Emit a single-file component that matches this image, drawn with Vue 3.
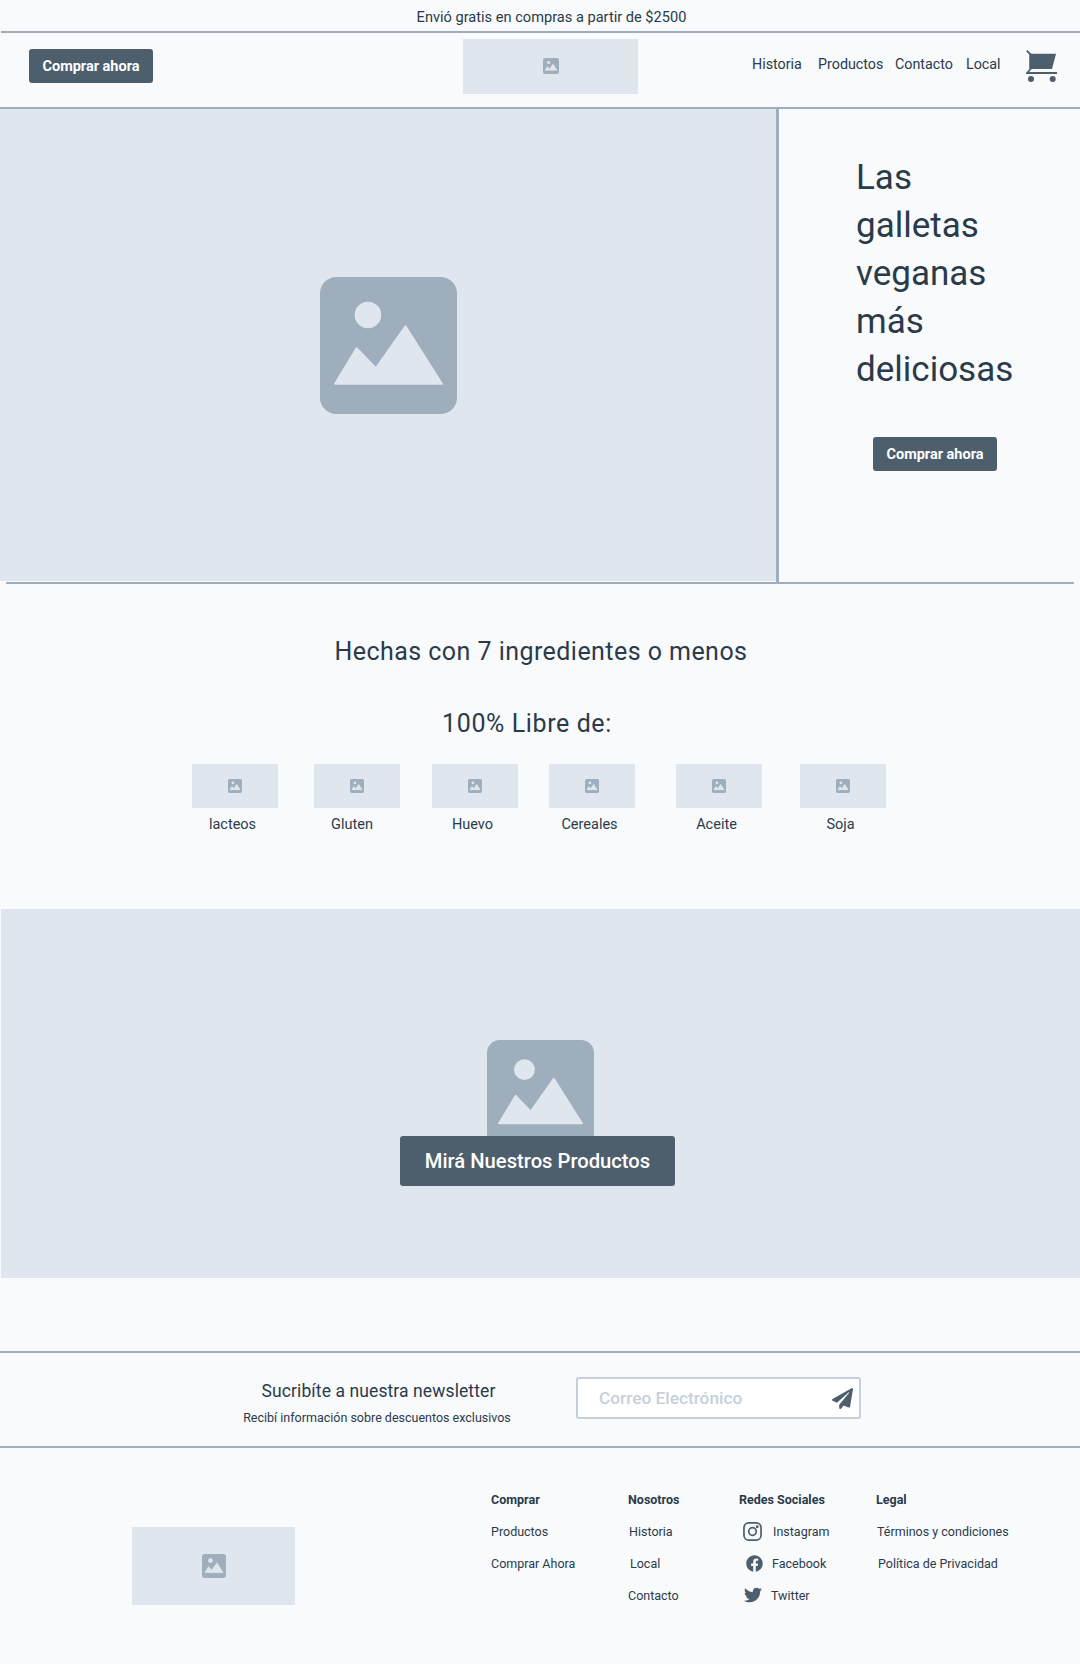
<script setup>
const freeFrom = ['lacteos', 'Gluten', 'Huevo', 'Cereales', 'Aceite', 'Soja'];

const footerCols = [
  { title: 'Comprar', links: ['Productos', 'Comprar Ahora'] },
  { title: 'Nosotros', links: ['Historia', 'Local', 'Contacto'] },
];
</script>

<template>
  <svg class="sprites" aria-hidden="true">
    <symbol id="img-ph" viewBox="0 0 100 100">
      <rect width="100" height="100" rx="12" fill="#9faebc" />
      <circle cx="35" cy="27.7" r="9.7" fill="#e0e6ee" />
      <path d="M11 78 L26.7 52 L40.8 66.5 L62.4 36 L89 78 Z" fill="#e0e6ee" stroke="#e0e6ee" stroke-width="1.4" stroke-linejoin="round" />
    </symbol>
  </svg>

  <div class="page">
    <div class="promo">Envió gratis en compras a partir de $2500</div>

    <header class="header">
      <button class="btn head-btn">Comprar ahora</button>
      <div class="ph logo"><svg class="ico-16"><use href="#img-ph" /></svg></div>
      <nav class="nav">
        <a>Historia</a>
        <a>Productos</a>
        <a>Contacto</a>
        <a>Local</a>
      </nav>
      <svg class="cart" viewBox="0 0 33 34">
        <path d="M3.3 4.7H30L26 20H3.3Z" fill="#4d5e6c" />
        <path d="M.7 1.7 4.7 5.5V20L1 24H31" fill="none" stroke="#4d5e6c" stroke-width="1.8" />
        <circle cx="5" cy="30" r="3" fill="#4d5e6c" />
        <circle cx="26.7" cy="30" r="3" fill="#4d5e6c" />
      </svg>
    </header>

    <section class="hero">
      <div class="ph hero-img"><svg class="ico-hero"><use href="#img-ph" /></svg></div>
      <div class="hero-side">
        <h1>Las galletas veganas más deliciosas</h1>
        <button class="btn hero-btn">Comprar ahora</button>
      </div>
    </section>

    <section class="free">
      <h2>Hechas con 7 ingredientes o menos</h2>
      <h2 class="free-title">100% Libre de:</h2>
      <div class="free-list">
        <div v-for="item in freeFrom" :key="item" class="free-item">
          <div class="ph free-img"><svg class="ico-14"><use href="#img-ph" /></svg></div>
          <span>{{ item }}</span>
        </div>
      </div>
    </section>

    <section class="ph banner">
      <svg class="ico-banner"><use href="#img-ph" /></svg>
      <button class="btn banner-btn">Mirá Nuestros Productos</button>
    </section>

    <section class="news">
      <div class="news-text">
        <p class="news-title">Sucribíte a nuestra newsletter</p>
        <p class="news-sub">Recibí información sobre descuentos exclusivos</p>
      </div>
      <div class="news-input">
        <span>Correo Electrónico</span>
        <svg class="send" viewBox="0 0 512 512">
          <path fill="#4d5e6c" d="M476 3.2L12.5 270.6c-18.1 10.4-15.8 35.6 2.2 43.2L121 358.4l287.3-253.2c5.5-4.9 13.3 2.6 8.6 8.3L176 407v80.5c0 23.6 28.5 32.9 42.5 15.8L282 426l124.6 52.2c14.2 6 30.4-2.9 33-18.2l72-432C515 7.8 493.3-6.8 476 3.2z" />
        </svg>
      </div>
    </section>

    <footer class="footer">
      <div class="ph foot-logo"><svg class="ico-24"><use href="#img-ph" /></svg></div>
      <div class="foot-cols">
        <div v-for="col in footerCols" :key="col.title" class="foot-col">
          <h4>{{ col.title }}</h4>
          <a v-for="link in col.links" :key="link">{{ link }}</a>
        </div>
        <div class="foot-col social">
          <h4>Redes Sociales</h4>
          <a>
            <svg class="ig" viewBox="0 0 20 20" fill="none" stroke="#4d5e6c" stroke-width="1.8">
              <rect x="1" y="1" width="18" height="18" rx="5" />
              <circle cx="10" cy="10" r="4" />
              <circle cx="15" cy="5" r=".6" fill="#4d5e6c" />
            </svg>
            Instagram
          </a>
          <a>
            <svg class="fb" viewBox="0 0 512 512">
              <path fill="#4d5e6c" d="M504 256C504 119 393 8 256 8S8 119 8 256c0 123.78 90.69 226.38 209.25 245V327.69h-63V256h63v-54.64c0-62.15 37-96.48 93.67-96.48 27.14 0 55.52 4.84 55.52 4.84v61h-31.28c-30.8 0-40.41 19.12-40.41 38.73V256h68.78l-11 71.69h-57.78V501C413.31 482.38 504 379.78 504 256z" />
            </svg>
            Facebook
          </a>
          <a>
            <svg class="tw" viewBox="0 0 512 512">
              <path fill="#4d5e6c" d="M459.37 151.716c.325 4.548.325 9.097.325 13.645 0 138.72-105.583 298.558-298.558 298.558-59.452 0-114.68-17.219-161.137-47.106 8.447.974 16.568 1.299 25.34 1.299 49.055 0 94.213-16.568 130.274-44.832-46.132-.975-84.792-31.188-98.112-72.772 6.498.974 12.995 1.624 19.818 1.624 9.421 0 18.843-1.3 27.614-3.573-48.081-9.747-84.143-51.98-84.143-102.985v-1.299c13.969 7.797 30.214 12.67 47.431 13.319-28.264-18.843-46.781-51.005-46.781-87.391 0-19.492 5.197-37.36 14.294-52.954 51.655 63.675 129.3 105.258 216.365 109.807-1.624-7.797-2.599-15.918-2.599-24.04 0-57.828 46.782-104.934 104.934-104.934 30.213 0 57.502 12.67 76.67 33.137 23.715-4.548 46.456-13.32 66.599-25.34-7.798 24.366-24.366 44.833-46.132 57.827 21.117-2.273 41.584-8.122 60.426-16.243-14.292 20.791-32.161 39.308-52.628 54.253z" />
            </svg>
            Twitter
          </a>
        </div>
        <div class="foot-col legal">
          <h4>Legal</h4>
          <a>Términos y condiciones</a>
          <a>Política de Privacidad</a>
        </div>
      </div>
    </footer>
  </div>
</template>

<style>
html,
body {
  background: #f8fafc;
}
</style>

<style scoped>
.sprites {
  position: absolute;
  width: 0;
  height: 0;
}
.page {
  width: 1080px;
  height: 1664px;
  overflow: hidden;
  background: #f8fafc;
  color: #2b3a4a;
  font-family: Roboto, 'Liberation Sans', sans-serif;
}
h1,
h2,
h4,
p {
  margin: 0;
  font-weight: 400;
}
.ph {
  display: flex;
  align-items: center;
  justify-content: center;
  background: #e0e6ee;
}
.ico-14 {
  width: 14px;
  height: 14px;
}
.ico-16 {
  width: 16px;
  height: 16px;
}
.ico-24 {
  width: 24px;
  height: 24px;
}
.btn {
  border: 0;
  border-radius: 3px;
  background: #4d5e6c;
  color: #fff;
  font-family: inherit;
  font-size: 14.5px;
  font-weight: 700;
  width: 124px;
  height: 34px;
  padding: 0;
}

.promo {
  height: 31px;
  margin-left: 1px;
  border-bottom: 2px solid #9faebc;
  padding-left: 22px;
  text-align: center;
  font-size: 14.6px;
  line-height: 34px;
}

.header {
  display: flex;
  align-items: center;
  height: 74px;
  border-bottom: 2px solid #9faebc;
}
.head-btn {
  margin-left: 29px;
  margin-top: -8px;
}
.logo {
  width: 175px;
  height: 55px;
  margin-left: 310px;
  margin-top: -8px;
}
.nav {
  display: grid;
  grid-template-columns: 66px 77px 71px 34px;
  margin-left: 114px;
  margin-top: -12px;
  font-size: 14.3px;
}
.cart {
  width: 33px;
  height: 34px;
  margin-left: 26px;
  margin-top: -8px;
}

.hero {
  display: flex;
  height: 473px;
}
.hero-img {
  width: 776px;
  height: 472px;
}
.ico-hero {
  width: 137px;
  height: 137px;
}
.hero-side {
  flex: 1;
  border-left: 3px solid #9faebc;
  padding-left: 77px;
}
.hero-side h1 {
  width: 170px;
  margin-top: 45px;
  font-size: 35px;
  line-height: 48px;
}
.hero-btn {
  margin-top: 43px;
  margin-left: 17px;
}

.free {
  height: 325px;
  margin: 0 6px;
  border-top: 2px solid #9faebc;
  text-align: center;
}
.free h2 {
  margin-top: 50px;
  padding-left: 2px;
  font-size: 25px;
  line-height: 36px;
  letter-spacing: .45px;
}
.free h2.free-title {
  margin-top: 36px;
  padding-left: 0;
  padding-right: 26px;
  letter-spacing: .6px;
}
.free-list {
  display: flex;
  margin-top: 22px;
  padding-left: 186px;
  gap: 36px;
}
.free-item:nth-child(3) {
  margin-left: -4px;
}
.free-item:nth-child(4) {
  margin-left: -5px;
}
.free-item:nth-child(5) {
  margin-left: 5px;
}
.free-item:nth-child(6) {
  margin-left: 2px;
}
.free-item span {
  display: block;
  margin-top: 7px;
  padding-right: 5px;
  font-size: 14.5px;
  line-height: 20px;
}
.free-item:nth-child(2) span {
  padding-right: 10px;
}
.free-img {
  width: 86px;
  height: 44px;
}

.banner {
  position: relative;
  height: 369px;
  margin-left: 1px;
}
.ico-banner {
  width: 107px;
  height: 107px;
  margin-top: -1px;
}
.banner-btn {
  position: absolute;
  left: 399px;
  top: 227px;
  width: 275px;
  height: 50px;
  font-size: 20.2px;
  font-weight: 500;
}

.news {
  display: flex;
  height: 93px;
  margin-top: 73px;
  padding-left: 243px;
  border-top: 2px solid #9faebc;
  border-bottom: 2px solid #9faebc;
}
.news-text {
  width: 268px;
  margin-top: 25px;
  text-align: center;
}
.news-title {
  padding-left: 3px;
  font-size: 17.5px;
  line-height: 26px;
  letter-spacing: .1px;
}
.news-sub {
  margin-top: 5px;
  font-size: 12.5px;
  line-height: 18px;
}
.news-input {
  display: flex;
  align-items: center;
  justify-content: space-between;
  box-sizing: border-box;
  width: 285px;
  height: 42px;
  margin-top: 24px;
  margin-left: 65px;
  padding: 0 6px 0 21px;
  border: 2px solid #c5d0da;
  border-radius: 3px;
  background: #fff;
  color: #c5d0da;
  font-size: 17.3px;
  font-weight: 500;
}
.send {
  width: 21px;
  height: 21px;
}

.footer {
  position: relative;
  height: 216px;
}
.foot-logo {
  position: absolute;
  left: 132px;
  top: 79px;
  width: 163px;
  height: 78px;
}
.foot-cols {
  display: flex;
  padding-left: 491px;
  padding-top: 43px;
  font-size: 12.5px;
}
.foot-col {
  display: flex;
  flex-direction: column;
}
.foot-col:nth-child(1) {
  width: 137px;
}
.foot-col:nth-child(2) {
  width: 111px;
}
.social {
  width: 137px;
}
.foot-col h4 {
  height: 18px;
  margin-bottom: 13px;
  font-size: 12.5px;
  font-weight: 700;
  line-height: 18px;
}
.foot-col a {
  display: flex;
  align-items: center;
  height: 18px;
  margin-bottom: 14px;
}
.foot-col:nth-child(2) a:nth-of-type(1),
.legal a:nth-of-type(1) {
  margin-left: 1px;
}
.foot-col:nth-child(2) a:nth-of-type(2),
.legal a:nth-of-type(2) {
  margin-left: 2px;
}
.ig {
  width: 19px;
  height: 19px;
  margin-left: 4px;
  margin-right: 11px;
}
.fb {
  width: 17px;
  height: 17px;
  margin-left: 7px;
  margin-right: 9px;
}
.tw {
  width: 18px;
  height: 18px;
  margin-left: 5px;
  margin-right: 9px;
}
</style>
